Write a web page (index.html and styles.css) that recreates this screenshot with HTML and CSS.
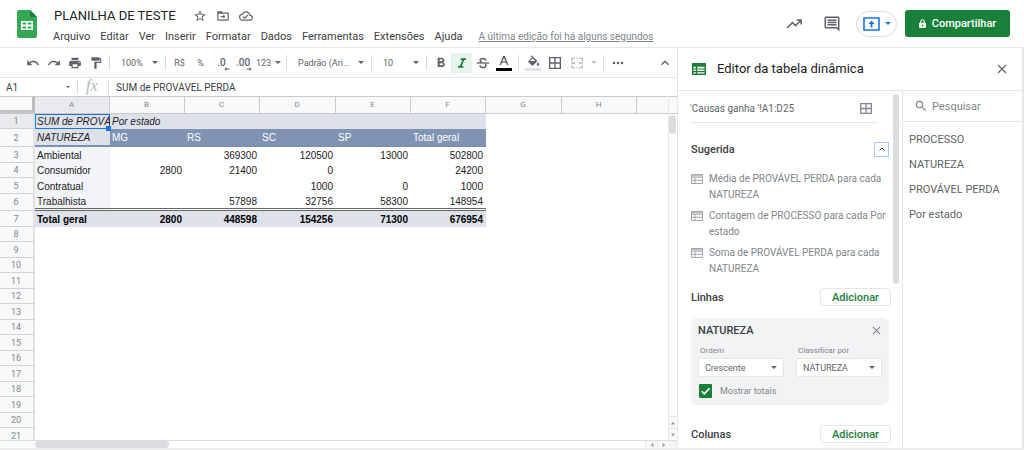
FILE: index.html
```html
<!DOCTYPE html>
<html lang="pt-BR">
<head>
<meta charset="utf-8">
<meta name="viewport" content="width=device-width, initial-scale=1">
<title>PLANILHA DE TESTE</title>
<link rel="stylesheet" href="styles.css">
</head>
<body>
<div class="app">
  <header class="top">
    <svg class="logo" viewBox="0 0 20 28" aria-hidden="true"><path d="M2 0h11l7 7v19a2 2 0 0 1-2 2H2a2 2 0 0 1-2-2V2a2 2 0 0 1 2-2z" fill="#34a853"/><path d="M13 0l7 7h-6a1 1 0 0 1-1-1z" fill="#188038"/><path d="M4 11h12v9H4zM5.500 12.500v2h3.700v-2zm5.300 0v2h3.700v-2zm-5.300 4v2h3.700v-2zm5.300 0v2h3.700v-2z" fill="#fff" fill-rule="evenodd"/></svg>
    <div class="doc">
      <div class="doc-title">
        <h1>PLANILHA DE TESTE</h1>
        <button class="icon-btn" aria-label="Marcar com estrela"><svg class="i14" viewBox="0 0 24 24"><path d="M22 9.240l-7.190-.62L12 2 9.190 8.630 2 9.240l5.460 4.730L5.820 21 12 17.270 18.180 21l-1.630-7.030L22 9.240zM12 15.400l-3.760 2.270 1-4.280-3.320-2.880 4.380-.38L12 6.100l1.710 4.040 4.380.38-3.320 2.880 1 4.280L12 15.400z"/></svg></button>
        <button class="icon-btn" aria-label="Mover"><svg class="i14" viewBox="0 0 24 24"><path d="M20 6h-8l-2-2H4c-1.100 0-2 .9-2 2v12c0 1.100.9 2 2 2h16c1.100 0 2-.9 2-2V8c0-1.100-.9-2-2-2zm0 12H4V8h16v10zM12.500 16.500L16 13l-3.500-3.500v2.500H8v2h4.500z"/></svg></button>
        <button class="icon-btn" aria-label="Status do documento"><svg class="i14" viewBox="0 0 24 24"><path d="M19.350 10.040A7.490 7.490 0 0 0 12 4C9.110 4 6.600 5.640 5.350 8.040A5.994 5.994 0 0 0 0 14c0 3.310 2.690 6 6 6h13c2.760 0 5-2.240 5-5 0-2.640-2.050-4.780-4.650-4.960zM19 18H6c-2.210 0-4-1.790-4-4 0-2.050 1.530-3.760 3.560-3.970l1.070-.11.5-.95A5.469 5.469 0 0 1 12 6c2.620 0 4.880 1.860 5.390 4.430l.3 1.500 1.530.11A2.980 2.980 0 0 1 22 15c0 1.650-1.350 3-3 3zm-9-3.820l-2.090-2.090L6.500 13.500 10 17l6.010-6.010-1.410-1.410z"/></svg></button>
      </div>
      <nav class="menus">
        <button>Arquivo</button><button>Editar</button><button>Ver</button><button>Inserir</button><button>Formatar</button><button>Dados</button><button>Ferramentas</button><button>Extensões</button><button>Ajuda</button>
        <a href="#historico">A última edição foi há alguns segundos</a>
      </nav>
    </div>
    <div class="actions">
      <button class="icon-btn" aria-label="Atividade"><svg class="i18" viewBox="0 0 24 24"><path d="M15.500 5.500v2h3.600l-5.100 5.200-4-4-8 8 1.400 1.400L10 11.500l4 4 6.500-6.600v3.600h2v-7z"/></svg></button>
      <button class="icon-btn" aria-label="Comentários"><svg class="i18" viewBox="0 0 24 24"><path d="M21.990 4c0-1.100-.89-2-1.990-2H4c-1.100 0-2 .9-2 2v12c0 1.100.9 2 2 2h14l4 4-.01-18zM20 4v13.170L18.830 16H4V4h16zM6 12h12v2H6zm0-3h12v2H6zm0-3h12v2H6z"/></svg></button>
      <button class="present" aria-label="Apresentar"><svg class="present-icon" viewBox="0 0 17 14"><path d="M1 1h15v12H1z" fill="none" stroke="#1a73e8" stroke-width="1.600"/><path d="M8.500 3.500L5.300 7h2.300v3.500h1.800V7h2.300z"/></svg><svg class="caret" viewBox="0 0 6 3"><path d="M0 0h6L3 3z"/></svg></button>
      <button class="share"><svg viewBox="0 0 8 10"><path d="M1 4h6a1 1 0 0 1 1 1v4a1 1 0 0 1-1 1H1a1 1 0 0 1-1-1V5a1 1 0 0 1 1-1zm3 2a1 1 0 1 0 0 2 1 1 0 0 0 0-2z" fill-rule="evenodd"/><path d="M2 4.500V2.700a2 2 0 0 1 4 0v1.800" fill="none" stroke="#fff" stroke-width="1.200"/></svg>Compartilhar</button>
    </div>
  </header>

  <div class="body">
    <main class="sheet">
      <div class="toolbar">
        <button aria-label="Desfazer"><svg class="i14" viewBox="0 0 24 24"><path d="M12.500 8c-2.650 0-5.050.99-6.900 2.600L2 7v9h9l-3.620-3.620c1.390-1.160 3.160-1.880 5.120-1.880 3.540 0 6.550 2.310 7.600 5.500l2.370-.78C21.080 11.030 17.150 8 12.500 8z"/></svg></button>
        <button aria-label="Refazer"><svg class="i14" viewBox="0 0 24 24"><path d="M18.400 10.600C16.550 8.990 14.150 8 11.500 8c-4.650 0-8.580 3.030-9.960 7.220L3.900 16a8.002 8.002 0 0 1 7.600-5.500c1.950 0 3.730.72 5.120 1.880L13 16h9V7l-3.600 3.600z"/></svg></button>
        <button aria-label="Imprimir"><svg class="i14" viewBox="0 0 24 24"><path d="M19 8H5c-1.660 0-3 1.340-3 3v6h4v4h12v-4h4v-6c0-1.660-1.340-3-3-3zm-3 11H8v-5h8v5zm3-7c-.55 0-1-.45-1-1s.45-1 1-1 1 .45 1 1-.45 1-1 1zm-1-9H6v4h12V3z"/></svg></button>
        <button aria-label="Pintar formatação"><svg class="i14" viewBox="0 0 24 24"><path d="M18 4V3c0-.55-.45-1-1-1H5c-.55 0-1 .45-1 1v4c0 .55.45 1 1 1h12c.55 0 1-.45 1-1V6h1v4H9v11c0 .55.45 1 1 1h2c.55 0 1-.45 1-1v-9h8V4h-3z"/></svg></button>
        <i class="sep"></i>
        <button class="drop zoom">100%<svg class="caret" viewBox="0 0 6 3"><path d="M0 0h6L3 3z"/></svg></button>
        <i class="sep"></i>
        <button>R$</button>
        <button>%</button>
        <button class="dec" aria-label="Diminuir casas decimais">.0<svg viewBox="0 0 5 4"><path d="M0 2l2-2v1.500h3v1H2V4z"/></svg></button>
        <button class="dec wide" aria-label="Aumentar casas decimais">.00<svg viewBox="0 0 5 4"><path d="M5 2L3 0v1.500H0v1h3V4z"/></svg></button>
        <button class="num">123<svg class="caret" viewBox="0 0 6 3"><path d="M0 0h6L3 3z"/></svg></button>
        <i class="sep"></i>
        <button class="drop font">Padrão (Ari...<svg class="caret" viewBox="0 0 6 3"><path d="M0 0h6L3 3z"/></svg></button>
        <i class="sep"></i>
        <button class="drop size">10<svg class="caret" viewBox="0 0 6 3"><path d="M0 0h6L3 3z"/></svg></button>
        <i class="sep"></i>
        <button aria-label="Negrito"><svg class="i16" viewBox="0 0 24 24"><path d="M15.600 10.790c.97-.67 1.650-1.770 1.650-2.790 0-2.260-1.750-4-4-4H7v14h7.040c2.090 0 3.710-1.700 3.710-3.790 0-1.520-.86-2.820-2.150-3.420zM10 6.500h3c.83 0 1.500.67 1.500 1.500s-.67 1.500-1.500 1.500h-3v-3zm3.500 9H10v-3h3.500c.83 0 1.500.67 1.500 1.500s-.67 1.500-1.500 1.500z"/></svg></button>
        <button class="on" aria-label="Itálico" aria-pressed="true"><svg class="i16" viewBox="0 0 24 24"><path d="M10 5v2.500h2.400l-3.500 9H6V19h8v-2.500h-2.300l3.500-9H18V5z"/></svg></button>
        <button aria-label="Tachado"><svg class="i16" viewBox="0 0 24 24"><path d="M3 11h18v2H3z"/><path d="M16.500 8.500C16 6.400 14.400 5.300 12 5.300c-2.700 0-4.300 1.200-4.300 3 0 1.400.9 2.200 2.600 2.700M7.300 15.700c.5 2.100 2.200 3.200 4.700 3.200 2.800 0 4.500-1.200 4.500-3.100 0-1-.4-1.700-1.200-2.300" fill="none" stroke="#5f6368" stroke-width="2.300"/></svg></button>
        <button class="wide ink" aria-label="Cor do texto"><svg viewBox="0 0 16 17"><path d="M7.100 2h1.800L12.500 11h-1.600l-.8-2.200H5.900L5.100 11H3.500zM8 3.900L6.400 7.500h3.200z" fill-rule="evenodd"/><path d="M0 14h16v3H0z" fill="#000"/></svg></button>
        <i class="sep"></i>
        <button class="wide ink" aria-label="Cor de preenchimento"><svg viewBox="0 0 16 17"><path d="M11.800 6.600L6.500 1.300l-.8.8 1.300 1.300-3.600 3.600a.8.800 0 0 0 0 1.100l3.500 3.500a.8.800 0 0 0 1.100 0l3.800-3.900a.8.800 0 0 0 0-1.100zM5 7.100l2.600-2.600 2.600 2.600zM13 8.300s-1.200 1.300-1.200 2.100a1.200 1.200 0 0 0 2.400 0c0-.8-1.200-2.100-1.200-2.100z" fill-rule="evenodd"/><path d="M0 14h16v3H0z" fill="#dde1ea"/></svg></button>
        <button class="wide" aria-label="Bordas"><svg class="i16" viewBox="0 0 24 24"><path d="M3 3v18h18V3H3zm8 16H5v-6h6v6zm0-8H5V5h6v6zm8 8h-6v-6h6v6zm0-8h-6V5h6v6z"/></svg></button>
        <button class="wide off" aria-label="Mesclar células" disabled><svg class="i16" viewBox="0 0 24 24"><path d="M3 4h6v2H5v3H3zm8 0h2v2h-2zm4 0h6v5h-2V6h-4zM3 15h2v3h4v2H3zm16 0h2v5h-6v-2h4zm-8 3h2v2h-2zM3 11h4V9l3 3-3 3v-2H3zm18 0h-4V9l-3 3 3 3v-2h4z"/></svg></button>
        <button class="narrow off" aria-label="Tipo de mesclagem" disabled><svg class="caret" viewBox="0 0 6 3"><path d="M0 0h6L3 3z"/></svg></button>
        <i class="sep"></i>
        <button aria-label="Mais"><svg class="i16" viewBox="0 0 24 24"><path d="M6 10a2 2 0 1 0 0 4 2 2 0 0 0 0-4zm12 0a2 2 0 1 0 0 4 2 2 0 0 0 0-4zm-6 0a2 2 0 1 0 0 4 2 2 0 0 0 0-4z"/></svg></button>
        <button class="collapse" aria-label="Ocultar menus"><svg class="i16" viewBox="0 0 24 24"><path d="M12 8l-6 6 1.410 1.410L12 10.830l4.590 4.580L18 14z"/></svg></button>
      </div>

      <div class="formula">
        <button class="namebox">A1<svg class="caret small" viewBox="0 0 6 3"><path d="M0 0h6L3 3z"/></svg></button>
        <label class="fx" for="fx">fx</label>
        <input id="fx" type="text" value="SUM de PROVÁVEL PERDA">
      </div>

      <div class="grid-area">
        <div class="grid">
          <table>
            <colgroup><col class="c-head"><col class="c"><col class="c"><col class="c"><col class="c-w"><col class="c"><col class="c"><col class="c-w"><col class="c"><col></colgroup>
            <thead><tr><th class="corner"></th><th class="sel">A</th><th>B</th><th>C</th><th>D</th><th>E</th><th>F</th><th>G</th><th>H</th><th></th></tr></thead>
            <tbody>
              <tr class="r1"><th class="sel">1</th><td class="active"><div class="clip">SUM de PROVÁVEL</div><span class="handle"></span></td><td>Por estado</td><td></td><td></td><td></td><td></td></tr>
              <tr class="r2"><th>2</th><td class="key">NATUREZA</td><td>MG</td><td>RS</td><td>SC</td><td>SP</td><td>Total geral</td></tr>
              <tr class="data odd"><th>3</th><td>Ambiental</td><td></td><td>369300</td><td>120500</td><td>13000</td><td>502800</td></tr>
              <tr class="data"><th>4</th><td>Consumidor</td><td>2800</td><td>21400</td><td>0</td><td></td><td>24200</td></tr>
              <tr class="data odd"><th>5</th><td>Contratual</td><td></td><td></td><td>1000</td><td>0</td><td>1000</td></tr>
              <tr class="data last"><th>6</th><td>Trabalhista</td><td></td><td>57898</td><td>32756</td><td>58300</td><td>148954</td></tr>
              <tr class="total"><th>7</th><td>Total geral</td><td>2800</td><td>448598</td><td>154256</td><td>71300</td><td>676954</td></tr>
              <tr><th>8</th></tr>
              <tr class="odd"><th>9</th></tr>
              <tr><th>10</th></tr>
              <tr class="odd"><th>11</th></tr>
              <tr><th>12</th></tr>
              <tr class="odd"><th>13</th></tr>
              <tr><th>14</th></tr>
              <tr class="odd"><th>15</th></tr>
              <tr><th>16</th></tr>
              <tr class="odd"><th>17</th></tr>
              <tr><th>18</th></tr>
              <tr class="odd"><th>19</th></tr>
              <tr><th>20</th></tr>
              <tr class="odd"><th>21</th></tr>
            </tbody>
          </table>
        </div>
        <div class="vbar"><div class="vtop"></div><div class="vthumb"></div><div class="arrow push"><svg viewBox="0 0 4 3"><path d="M0 3h4L2 0z"/></svg></div><div class="arrow"><svg viewBox="0 0 4 3"><path d="M0 0h4L2 3z"/></svg></div></div>
      </div>
      <div class="hbar"><div class="hhead"></div><div class="hthumb"></div><div class="arrow push"><svg viewBox="0 0 3 4"><path d="M3 0v4L0 2z"/></svg></div><div class="arrow"><svg viewBox="0 0 3 4"><path d="M0 0v4l3-2z"/></svg></div><div class="hend"></div></div>
    </main>

    <aside class="panel">
      <div class="panel-head">
        <svg class="pivot" viewBox="0 0 14 12"><path d="M0 0h14v12H0zM1.500 3.800v1.700h2.300V3.800zm3.700 0v1.700h7.300V3.800zM1.500 6.600v1.500h2.300V6.600zm3.700 0v1.500h7.300V6.600zM1.500 9.200v1.400h2.300V9.200zm3.700 0v1.400h7.300V9.200z" fill-rule="evenodd"/></svg>
        <h2>Editor da tabela dinâmica</h2>
        <button class="icon-btn" aria-label="Fechar"><svg class="x" viewBox="0 0 10 10"><path d="M1 1l8 8M9 1L1 9"/></svg></button>
      </div>
      <div class="panel-body">
        <div class="editor">
          <div class="range">
            <input type="text" aria-label="Intervalo" value="'Causas ganha '!A1:D25">
            <button class="icon-btn" aria-label="Selecionar intervalo"><svg class="gridicon" viewBox="0 0 12 11"><path d="M.7.7h10.600v9.600H.7zM6 1v9M1 5.500h10"/></svg></button>
          </div>
          <div class="row sug"><h3>Sugerida</h3><button class="fold" aria-label="Recolher"><svg viewBox="0 0 6 4"><path d="M.5 3.500L3 1l2.500 2.500"/></svg></button></div>
          <ul class="suggest">
            <li><svg viewBox="0 0 12 10"><path d="M.5.5h11v9H.5zM.5 3.200h11M.5 6.300h11M4 3v6.500M.5 1.800h11"/></svg><a href="#s1">Média de PROVÁVEL PERDA para cada NATUREZA</a></li>
            <li><svg viewBox="0 0 12 10"><path d="M.5.5h11v9H.5zM.5 3.200h11M.5 6.300h11M4 3v6.500M.5 1.800h11"/></svg><a href="#s2">Contagem de PROCESSO para cada Por estado</a></li>
            <li><svg viewBox="0 0 12 10"><path d="M.5.5h11v9H.5zM.5 3.200h11M.5 6.300h11M4 3v6.500M.5 1.800h11"/></svg><a href="#s3">Soma de PROVÁVEL PERDA para cada NATUREZA</a></li>
          </ul>
          <div class="row"><h3>Linhas</h3><button class="add">Adicionar</button></div>
          <section class="card">
            <div class="card-head"><h4>NATUREZA</h4><button class="icon-btn" aria-label="Remover"><svg class="x" viewBox="0 0 10 10"><path d="M1 1l8 8M9 1L1 9"/></svg></button></div>
            <div class="fields">
              <div class="field"><label for="ordem">Ordem</label><div class="select"><select id="ordem"><option>Crescente</option><option>Decrescente</option></select><svg class="caret" viewBox="0 0 6 3"><path d="M0 0h6L3 3z"/></svg></div></div>
              <div class="field"><label for="classe">Classificar por</label><div class="select"><select id="classe"><option>NATUREZA</option></select><svg class="caret" viewBox="0 0 6 3"><path d="M0 0h6L3 3z"/></svg></div></div>
            </div>
            <label class="check"><span class="tick"><input type="checkbox" checked><svg viewBox="0 0 14 14"><path d="M3 7.300l2.700 2.700L11.300 4.200"/></svg></span>Mostrar totais</label>
          </section>
          <div class="row"><h3>Colunas</h3><button class="add">Adicionar</button></div>
        </div>
        <div class="pbar"><div></div></div>
        <div class="fieldlist">
          <label class="search"><svg viewBox="0 0 24 24"><path d="M15.500 14h-.79l-.28-.27A6.471 6.471 0 0 0 16 9.500 6.500 6.500 0 1 0 9.500 16c1.610 0 3.090-.59 4.230-1.570l.27.28v.79l5 4.990L20.490 19l-4.990-5zm-6 0C7.010 14 5 11.990 5 9.500S7.010 5 9.500 5 14 7.010 14 9.500 11.990 14 9.500 14z"/></svg><input type="search" placeholder="Pesquisar" aria-label="Pesquisar"></label>
          <ul><li>PROCESSO</li><li>NATUREZA</li><li>PROVÁVEL PERDA</li><li>Por estado</li></ul>
        </div>
      </div>
    </aside>
  </div>
  <footer class="foot"></footer>
</div>
</body>
</html>
```
FILE: styles.css
```css
* { box-sizing: border-box; }
body { margin: 0; font-family: Roboto, "Liberation Sans", sans-serif; font-size: 11px; color: #3c4043; background: #fff; }
h1, h2, h3, h4, ul { margin: 0; padding: 0; font-weight: 400; }
ul { list-style: none; }
button, input, select { font: inherit; color: inherit; background: none; border: 0; padding: 0; margin: 0; outline: 0; }
button { display: flex; align-items: center; justify-content: center; white-space: nowrap; }
svg { display: block; flex: none; fill: #5f6368; }
.i14 { width: 14px; height: 14px; }
.i16 { width: 16px; height: 16px; }
.i18 { width: 18px; height: 18px; }
.caret { width: 6px; height: 3px; }
.caret.small { width: 4px; height: 2px; }

.app { display: flex; flex-direction: column; height: 100vh; overflow: hidden; }

.top { display: flex; flex: none; height: 48px; padding: 0 14px 0 17px; border-bottom: 1px solid #e4e6e8; }
.logo { width: 20px; height: 28px; margin-top: 10px; }
.doc { flex: 1; min-width: 0; padding: 6px 0 0 16px; }
.doc-title { display: flex; align-items: center; height: 20px; gap: 9px; }
.doc-title h1 { font-size: 13px; line-height: 20px; color: #202124; margin: 0 8px 0 1px; white-space: nowrap; }
.menus { display: flex; height: 20px; align-items: center; gap: 10px; white-space: nowrap; }
.menus a { margin-left: 6px; color: #80868b; font-size: 10px; }
.actions { display: flex; align-items: center; height: 47px; }
.actions .icon-btn { width: 38px; }
.present { width: 41px; height: 26px; margin: 0 8px 0 5px; gap: 5px; border: 1px solid #dadce0; border-radius: 13px; }
.present svg { fill: #1a73e8; }
.present-icon { width: 17px; height: 14px; }
.share { width: 105px; height: 27px; gap: 6px; border-radius: 3px; background: #188038; color: #fff; font-weight: 500; }
.share svg { width: 7px; height: 9px; fill: #fff; }

.body { display: flex; flex: 1; min-height: 0; }
.sheet { display: flex; flex-direction: column; flex: 1; min-width: 0; }

.toolbar { display: flex; align-items: center; flex: none; height: 30px; padding: 0 4px 0 22px; border-bottom: 1px solid #e4e6e8; color: #5f6368; font-size: 9px; }
.toolbar button { flex: none; width: 21px; height: 20px; }
.toolbar .wide { width: 22px; }
.toolbar .narrow { width: 12px; }
.toolbar .drop { justify-content: space-between; padding: 0 4px 0 8px; }
.toolbar .zoom { width: 49px; }
.toolbar .font { width: 78px; }
.toolbar .size { width: 48px; }
.toolbar .num { width: 29px; gap: 4px; }
.toolbar .on { background: #e6f4ea; }
.toolbar .on svg { fill: #188038; }
.toolbar .off svg { fill: #bdc1c6; }
.toolbar .ink svg { width: 16px; height: 17px; }
.toolbar .dec { position: relative; font-weight: 500; font-size: 10px; }
.toolbar .dec svg { position: absolute; right: 2px; bottom: 2px; width: 6px; height: 4px; }
.toolbar .collapse { margin-left: auto; width: 17px; }
.sep { flex: none; width: 1px; height: 15px; margin: 0 3px; background: #dadce0; }

.formula { display: flex; align-items: center; flex: none; height: 18px; }
.namebox { width: 78px; height: 14px; padding: 0 7px 0 6px; justify-content: space-between; border-right: 1px solid #dadce0; font-size: 10px; }
.fx { width: 31px; height: 14px; padding-left: 8px; border-right: 1px solid #dadce0; color: #b4b8bc; font: italic 16px/11px "Liberation Serif", serif; }
.formula input { flex: 1; min-width: 0; padding-left: 7px; font-size: 10px; }

.grid-area { display: flex; flex: 1; min-height: 0; }
.grid { flex: 1; min-width: 0; overflow: hidden; }
table { width: 100%; table-layout: fixed; border-collapse: separate; border-spacing: 0; font: 10px/13px "Liberation Sans", Arial, sans-serif; color: #222; }
.c-head { width: 35px; }
.c { width: 75px; }
.c-w { width: 76px; }
th, td { padding: 0 3px 0 2px; white-space: nowrap; overflow: hidden; }
th { font: 400 9px/12px Roboto, sans-serif; color: #80868b; background: #f8f9fa; text-align: center; }
thead th { height: 18px; border: solid #c8cacc; border-width: 1px 1px 1px 0; font-size: 8px; }
thead th:last-child { border-right: 0; }
thead .corner { border-right: 3px solid #bcbcbc; border-bottom: 4px solid #c4c4c4; }
th.sel { background: #e8eaed; }
tbody th { border-bottom: 1px solid #d0d2d4; border-right: 2px solid #e2e3e4; }
tbody tr { height: 15px; }
tbody .odd { height: 16px; }
tbody .r1 { height: 15px; }
tbody .r2 { height: 18px; }
tbody .last { height: 17px; }
tbody .total { height: 16px; }
.r1 td, .total td { background: #dde1ea; }
.r1 td { font-style: italic; }
.r1 .active { position: relative; overflow: visible; padding-right: 0; box-shadow: inset 0 0 0 1px #1a73e8; }
.clip { overflow: hidden; }
.handle { position: absolute; right: -1px; bottom: -2px; width: 5px; height: 5px; background: #1a73e8; }
.r2 td { background: #8093b3; color: #fff; border-bottom: 2px solid #7b8fb3; }
.r2 .key { background: #dde1ea; color: #222; font-style: italic; }
.data td, .total td { text-align: right; }
.data td:nth-child(2), .total td:nth-child(2) { text-align: left; }
.data td:nth-child(2) { background: #f3f4f7; }
.last td { border-bottom: 3px double #666; }
.total td { font-weight: 700; color: #000; }

.vbar { display: flex; flex-direction: column; flex: none; width: 9px; border-left: 1px solid #e4e6e8; }
.vtop { height: 18px; border: solid #c8cacc; border-width: 1px 0; background: #f8f9fa; }
.vthumb { width: 7px; height: 19px; margin-top: 1px; border-radius: 4px; background: #dadce0; }
.arrow { display: flex; align-items: center; justify-content: center; flex: none; }
.arrow svg { width: 4px; height: 4px; fill: #999; }
.vbar .arrow { height: 12px; border-top: 1px solid #e4e6e8; background: #fafafa; }
.vbar .push { margin-top: auto; }
.hbar { display: flex; flex: none; height: 8px; border-top: 1px solid #dadce0; }
.hhead { width: 35px; background: #f8f9fa; }
.hthumb { width: 134px; height: 7px; border-radius: 4px; background: #dadce0; }
.hbar .arrow { width: 12px; border-left: 1px solid #e4e6e8; background: #fafafa; }
.hbar .push { margin-left: auto; }
.hend { width: 8px; background: #f4f5f6; }

.panel { display: flex; flex-direction: column; flex: none; width: 347px; border: solid #e4e6e8; border-width: 0 2px 0 1px; }
.panel-head { display: flex; align-items: center; flex: none; height: 43px; padding: 0 15px 0 14px; border-bottom: 1px solid #e4e6e8; }
.pivot { width: 14px; height: 12px; fill: #188038; }
.panel-head h2 { flex: 1; margin-left: 11px; font-size: 13px; line-height: 20px; color: #202124; }
.x { width: 10px; height: 10px; fill: none; stroke: #5f6368; stroke-width: 1.200; }
.panel-body { display: flex; flex: 1; min-height: 0; }
.editor { flex: 1; min-width: 0; padding: 4px 2px 0 13px; overflow: hidden; }
.range { display: flex; align-items: center; height: 28px; padding-right: 6px; margin: 0 13px 0 -1px; border-bottom: 1px solid #e4e6e8; }
.range input { flex: 1; min-width: 0; font-size: 10px; color: #5f6368; }
.gridicon { width: 12px; height: 11px; fill: none; stroke: #80868b; stroke-width: 1.300; }
.row { display: flex; align-items: center; justify-content: space-between; height: 18px; }
.row h3 { font-size: 11px; font-weight: 500; }
.sug { margin: 17px 2px 13px 0; }
.fold { width: 15px; height: 15px; border: 1px solid #a8c7fa; }
.fold svg { width: 6px; height: 4px; fill: none; stroke: #3c4043; }
.suggest { display: grid; gap: 5px; margin-bottom: 11px; }
.suggest li { display: flex; gap: 6px; }
.suggest svg { width: 12px; height: 10px; margin-top: 3px; fill: none; stroke: #a3a6aa; }
.suggest a { color: #80868b; font-size: 10px; line-height: 16px; text-decoration: none; }
.add { width: 71px; height: 18px; border: 1px solid #e4e6e8; border-radius: 3px; color: #188038; font-size: 11px; font-weight: 500; }
.card { height: 87px; margin: 12px 2px 20px 0; padding: 4px 7px 0; border-radius: 6px; background: #f1f3f4; }
.card-head { display: flex; align-items: center; justify-content: space-between; height: 16px; }
.card-head h4 { font-size: 11px; font-weight: 500; }
.card-head svg { width: 9px; height: 9px; margin-right: 1px; stroke: #80868b; }
.fields { display: flex; gap: 12px; margin: 6px 0 7px; }
.field { width: 86px; }
.field label { display: block; padding-left: 2px; font-size: 8px; line-height: 14px; color: #80868b; }
.select { display: flex; align-items: center; position: relative; height: 19px; border: 1px solid #e4e6e8; border-radius: 2px; background: #fff; color: #5f6368; }
.select select { flex: 1; min-width: 0; height: 17px; padding-left: 6px; appearance: none; font-size: 9px; }
.select .caret { position: absolute; right: 6px; pointer-events: none; }
.check { display: flex; align-items: center; gap: 8px; height: 14px; padding-left: 1px; font-size: 9px; color: #80868b; }
.tick { position: relative; width: 13px; height: 14px; }
.tick input { display: block; width: 13px; height: 14px; appearance: none; border-radius: 1px; background: #188038; }
.tick svg { position: absolute; inset: 0; width: 13px; height: 14px; fill: none; stroke: #fff; stroke-width: 1.800; pointer-events: none; }
.pbar { flex: none; width: 9px; padding-top: 3px; }
.pbar div { width: 6px; height: 190px; border-radius: 3px; background: #dadce0; }
.fieldlist { flex: none; width: 120px; border-left: 1px solid #e4e6e8; }
.search { display: flex; align-items: center; gap: 4px; height: 31px; padding-left: 11px; border-bottom: 1px solid #e4e6e8; }
.search svg { width: 14px; height: 14px; fill: #80868b; }
.search input { flex: 1; min-width: 0; font-size: 11px; }
.search input::placeholder { color: #80868b; opacity: 1; }
.fieldlist ul { padding: 5px 0 0 6px; font-size: 11px; line-height: 25px; color: #5f6368; }
.foot { flex: none; height: 2px; background: #eceeef; }
```
